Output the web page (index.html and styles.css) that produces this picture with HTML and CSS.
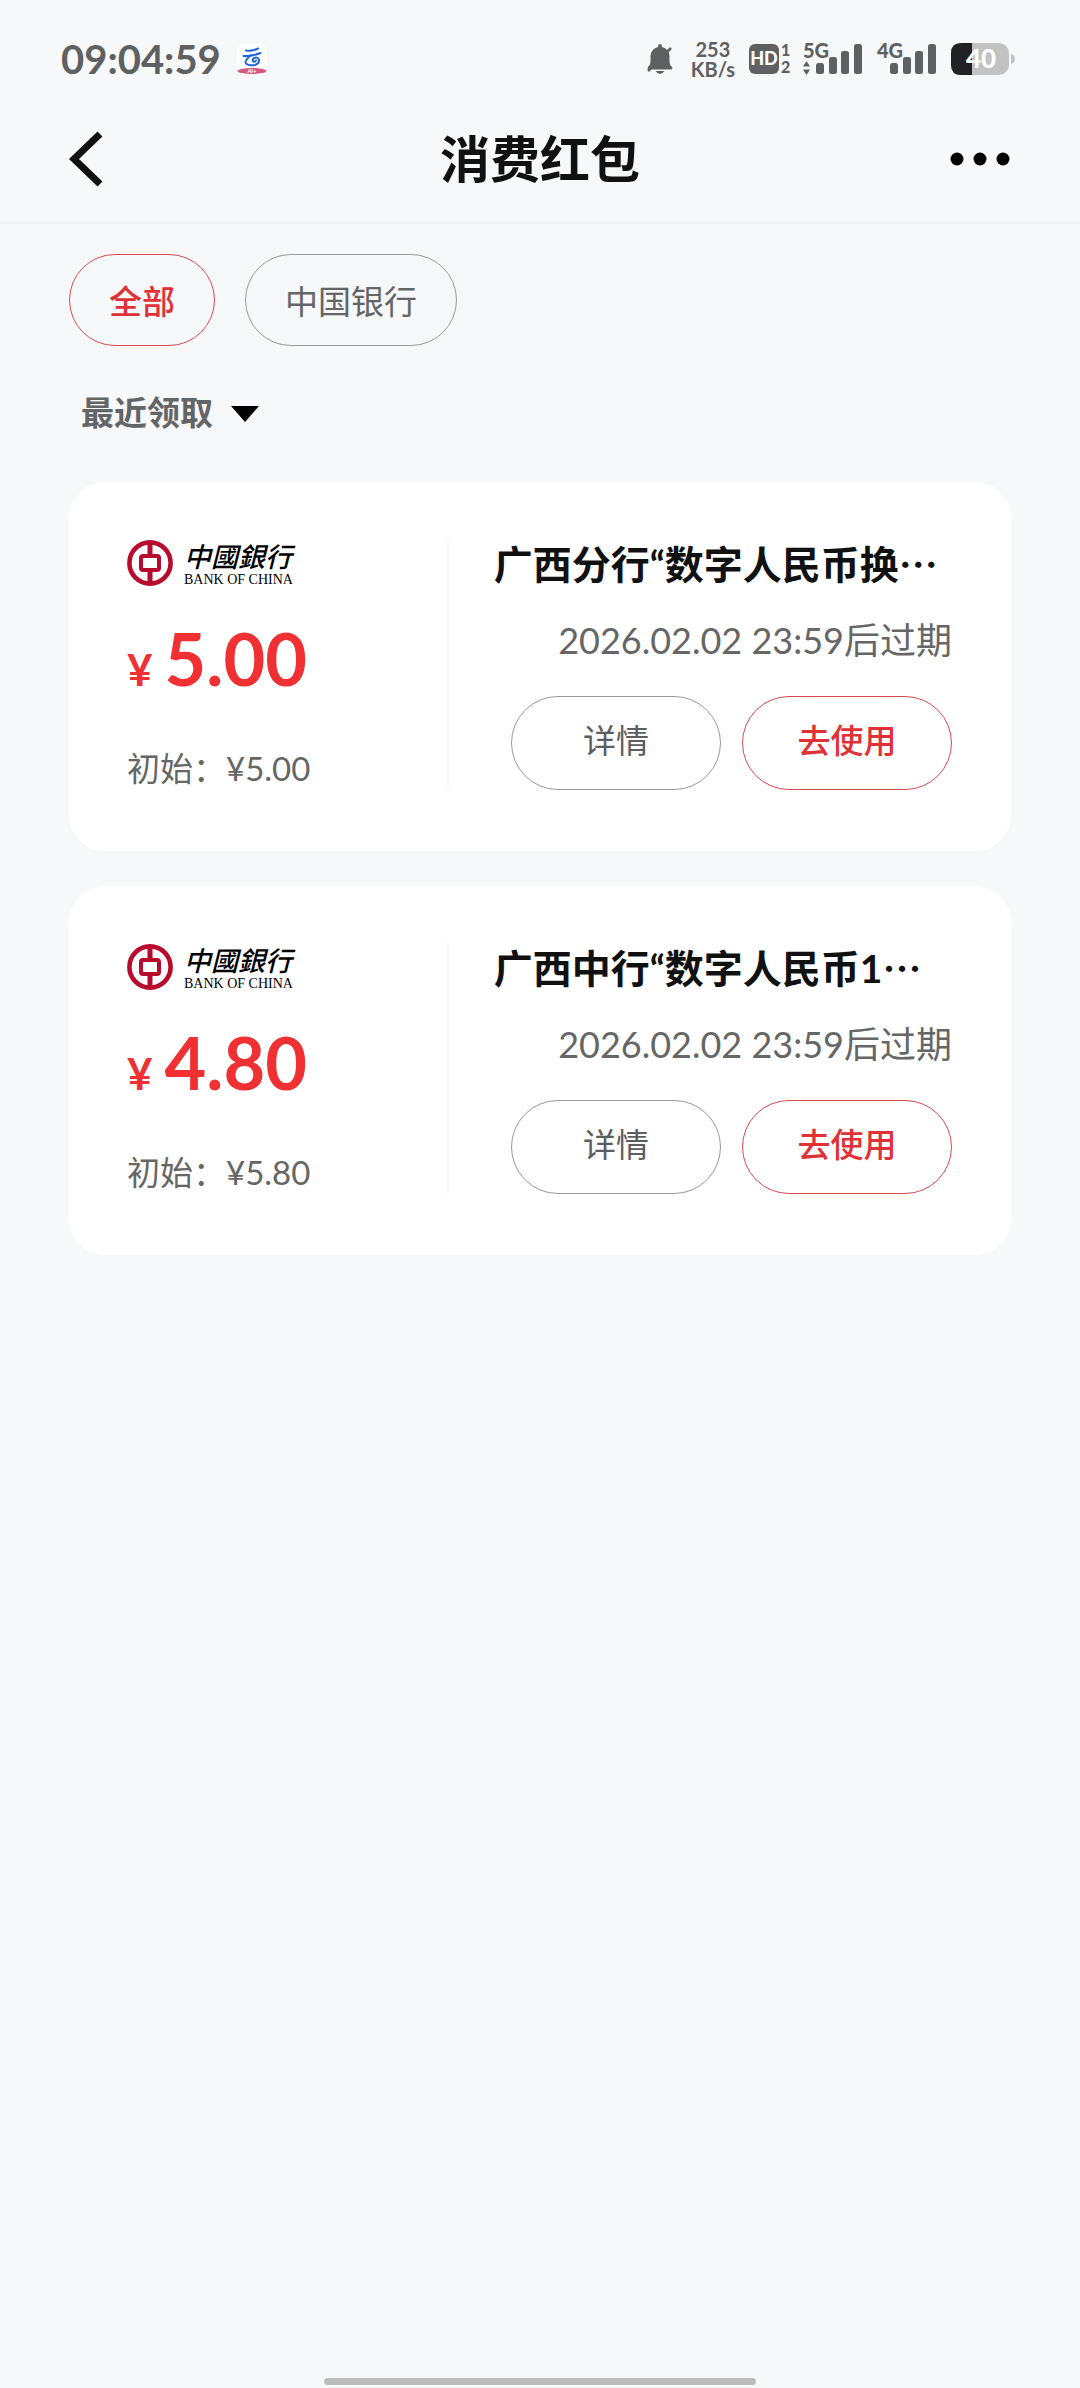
FILE: index.html
```html
<!DOCTYPE html>
<html lang="zh-CN">
<head>
<meta charset="utf-8">
<meta name="viewport" content="width=device-width, initial-scale=1">
<title>消费红包</title>
<link rel="stylesheet" href="styles.css">
</head>
<body>
<svg class="defs" aria-hidden="true">
  <symbol id="boc" viewBox="0 0 46 46">
    <circle cx="23" cy="23" r="20.6" fill="none" stroke="#b80a2c" stroke-width="4.6"/>
    <rect x="14" y="16" width="18" height="14" rx="2" fill="none" stroke="#b80a2c" stroke-width="4"/>
    <path d="M23 2v13M23 31v13" stroke="#b80a2c" stroke-width="5"/>
  </symbol>
  <symbol id="bars" viewBox="0 0 46 30">
    <rect x="0" y="19" width="8" height="11" rx="2.5"/>
    <rect x="13" y="13" width="8" height="17" rx="2.5"/>
    <rect x="25" y="7" width="8" height="23" rx="2.5"/>
    <rect x="38" y="0" width="8" height="30" rx="2.5"/>
  </symbol>
</svg>
<div class="screen">
  <div class="status">
    <div class="status-left">
      <span class="clock">09:04:59</span>
      <svg class="app-icon" width="30" height="30" viewBox="0 0 30 30" aria-hidden="true">
        <rect width="30" height="30" rx="5" fill="#fff"/>
        <path d="M9 6.500q6 1 12-2M6.500 12q8 .5 17-3" fill="none" stroke="#1f66d6" stroke-width="2" stroke-linecap="round"/>
        <path d="M14 11q-7 6-5 8.500t9 1.500q5-2 4-5.500-1.500-3-5-1.500-2.500 2-.5 3.500 2 .5 2.500-1" fill="none" stroke="#1f66d6" stroke-width="2" stroke-linecap="round"/>
        <ellipse cx="15" cy="27" rx="14.500" ry="3" fill="#d4577f"/>
        <text x="15" y="29" class="app-tag" text-anchor="middle">AI+</text>
      </svg>
    </div>
    <div class="status-right">
      <svg class="bell" width="26" height="30" viewBox="0 0 26 30" aria-hidden="true">
        <path d="M13 0q2 0 2 3 7 2 7.500 9v6q0 3 2.500 5 1 2-1 2.500H2Q0 25 1 23q2.500-2 2.500-5v-6Q4 5 11 3q0-3 2-3zM8.500 27h9q-2 3-4.500 3t-4.500-3z"/>
        <path d="M1 27L5 23M20 8L24 4" stroke="currentColor" stroke-width="2.500"/>
      </svg>
      <div class="speed"><span>253</span><span>KB/s</span></div>
      <svg class="hd" width="43" height="32" viewBox="0 0 43 32" aria-hidden="true">
        <rect y="1" width="30" height="30" rx="6"/>
        <text x="15" y="22" class="hd-text" text-anchor="middle">HD</text>
        <text x="32" y="13" class="sim-text">1</text>
        <text x="32" y="30" class="sim-text">2</text>
      </svg>
      <svg class="signal" width="60" height="32" viewBox="0 0 60 32" aria-hidden="true">
        <text x="0" y="15" class="net-text">5G</text>
        <path d="M0 23.500h7L3.500 18zM0 26.500h7L3.500 32z"/>
        <use href="#bars" x="13" y="1" width="46" height="30"/>
      </svg>
      <svg class="signal" width="60" height="32" viewBox="0 0 60 32" aria-hidden="true">
        <text x="0" y="15" class="net-text">4G</text>
        <use href="#bars" x="13" y="1" width="46" height="30"/>
      </svg>
      <svg class="battery" width="64" height="32" viewBox="0 0 64 32" aria-hidden="true">
        <rect width="58" height="32" rx="10" fill="#c2c2c2"/>
        <path d="M21 0H10Q0 0 0 10v12q0 10 10 10h11z" fill="#222"/>
        <path d="M60 11q4 1 4 5t-4 5z" fill="#c2c2c2"/>
        <text x="30" y="25" class="battery-text" text-anchor="middle">40</text>
      </svg>
    </div>
  </div>

  <header class="header">
    <button class="icon-button" type="button" aria-label="返回">
      <svg width="34" height="56" viewBox="0 0 34 56" aria-hidden="true"><path d="M30 3L4 28l26 25" fill="none" stroke="#111" stroke-width="7"/></svg>
    </button>
    <h1 class="title">消费红包</h1>
    <button class="icon-button more" type="button" aria-label="更多">
      <svg width="60" height="14" viewBox="0 0 60 14" aria-hidden="true"><circle cx="7" cy="7" r="6.500"/><circle cx="30" cy="7" r="6.500"/><circle cx="53" cy="7" r="6.500"/></svg>
    </button>
  </header>

  <main class="content">
    <div class="filters">
      <button class="pill pill-active" type="button">全部</button>
      <button class="pill" type="button">中国银行</button>
    </div>
    <label class="sort">
      <select class="sort-select" aria-label="排序"><option>最近领取</option></select>
      <svg class="sort-arrow" width="28" height="16" viewBox="0 0 28 16" aria-hidden="true"><path d="M0 0h28L14 16z"/></svg>
    </label>

    <div class="cards">
      <article class="card">
        <div class="amounts">
          <div class="logo">
            <svg width="46" height="46" aria-hidden="true"><use href="#boc"/></svg>
            <div class="logo-name"><span class="logo-cn">中國銀行</span><span class="logo-en">BANK OF CHINA</span></div>
          </div>
          <p class="price"><span class="yen">¥</span><span>5.00</span></p>
          <p class="initial">初始：¥5.00</p>
        </div>
        <div class="details">
          <h2 class="name">广西分行“数字人民币换<span class="dots">…</span></h2>
          <p class="expiry">2026.02.02 23:59后过期</p>
          <div class="actions">
            <button class="action" type="button">详情</button>
            <button class="action action-main" type="button">去使用</button>
          </div>
        </div>
      </article>
      <article class="card">
        <div class="amounts">
          <div class="logo">
            <svg width="46" height="46" aria-hidden="true"><use href="#boc"/></svg>
            <div class="logo-name"><span class="logo-cn">中國銀行</span><span class="logo-en">BANK OF CHINA</span></div>
          </div>
          <p class="price"><span class="yen">¥</span><span>4.80</span></p>
          <p class="initial">初始：¥5.80</p>
        </div>
        <div class="details">
          <h2 class="name">广西中行“数字人民币1<span class="dots">…</span></h2>
          <p class="expiry">2026.02.02 23:59后过期</p>
          <div class="actions">
            <button class="action" type="button">详情</button>
            <button class="action action-main" type="button">去使用</button>
          </div>
        </div>
      </article>
    </div>
  </main>
  <div class="home-bar"></div>
</div>
</body>
</html>
```
FILE: styles.css
```css
* {
  box-sizing: border-box;
}

body {
  margin: 0;
  background: #f6f8fa;
  color: #111;
  font-family: Lato, "Noto Sans CJK SC", sans-serif;
}

h1, h2, p {
  margin: 0;
}

button, select {
  margin: 0;
  padding: 0;
  border: 0;
  background: none;
  color: inherit;
  font: inherit;
}

svg {
  display: block;
  flex: none;
  overflow: visible;
}

.defs {
  position: absolute;
  width: 0;
  height: 0;
}

.screen {
  display: flex;
  flex-direction: column;
  min-height: 100vh;
}

/* Status bar */
.status {
  display: flex;
  justify-content: space-between;
  align-items: center;
  height: 96px;
  padding: 22px 65px 0 61px;
  color: #5f6062;
  fill: currentColor;
}

.status-left, .status-right {
  display: flex;
  align-items: center;
}

.status-left {
  gap: 16px;
}

.clock {
  font-size: 40px;
  font-weight: 700;
  line-height: 48px;
}

.app-tag {
  fill: #fff;
  font-size: 6px;
  font-weight: 900;
  font-style: italic;
}

.speed {
  display: flex;
  flex-direction: column;
  align-items: center;
  margin: 0 14px 0 18px;
  font-size: 20px;
  font-weight: 700;
  line-height: 20px;
}

.hd {
  margin-right: 11px;
}

.hd-text {
  fill: #fff;
  font-size: 18px;
  font-weight: 900;
}

.sim-text {
  font-size: 16px;
  font-weight: 900;
}

.net-text {
  font-size: 20px;
  font-weight: 900;
}

.signal {
  margin-right: 14px;
}

.battery-text {
  fill: #fff;
  font-size: 26px;
  font-weight: 900;
}

/* Header */
.header {
  display: flex;
  justify-content: space-between;
  align-items: center;
  height: 128px;
  padding: 0 70px;
  border-bottom: 2px solid #f0f1f3;
}

.icon-button {
  display: flex;
  align-items: center;
  width: 64px;
  height: 64px;
}

.more {
  justify-content: flex-end;
}

.title {
  font-size: 50px;
  font-weight: 700;
  line-height: 72px;
}

/* Filters */
.content {
  flex: 1;
  padding: 30px 69px;
}

.filters {
  display: flex;
  gap: 30px;
}

.pill {
  height: 92px;
  padding: 0 39px;
  border: 1px solid #98999b;
  border-radius: 46px;
  color: #646567;
  font-size: 33px;
}

.pill-active {
  border-color: #d84a50;
  color: #e03236;
  font-weight: 500;
}

.sort {
  display: inline-flex;
  align-items: center;
  gap: 18px;
  height: 52px;
  margin: 40px 0 44px 12px;
  vertical-align: top;
}

.sort-select {
  appearance: none;
  color: #646567;
  font-size: 33px;
  font-weight: 700;
  line-height: 52px;
}

.sort-arrow {
  margin-top: 4px;
}

/* Red packet cards */
.cards {
  display: flex;
  flex-direction: column;
  gap: 35px;
}

.card {
  display: flex;
  padding: 56px 59px 61px 58px;
  border-radius: 36px;
  background: #fff;
}

.amounts {
  flex: 0 0 39%;
  padding-top: 2px;
  border-right: 2px solid #f8f8f9;
}

.logo {
  display: flex;
  gap: 11px;
  height: 46px;
}

.logo-name {
  display: flex;
  flex-direction: column;
  color: #000;
}

.logo-cn {
  font-family: "Noto Sans CJK TC", sans-serif;
  font-size: 27px;
  font-style: italic;
  font-weight: 500;
  line-height: 32px;
}

.logo-en {
  font-family: "Liberation Serif", serif;
  font-size: 14px;
  line-height: 16px;
}

.price {
  display: flex;
  align-items: baseline;
  gap: 12px;
  margin-top: 30px;
  color: #f03033;
  font-size: 72px;
  font-weight: 700;
  line-height: 84px;
}

.yen {
  font-size: 44px;
  line-height: 52px;
}

.initial {
  margin-top: 48px;
  color: #666;
  font-size: 33px;
  line-height: 40px;
}

.details {
  flex: 1;
  min-width: 0;
  padding-left: 45px;
}

.name {
  font-size: 39px;
  font-weight: 700;
  line-height: 52px;
  white-space: nowrap;
}

.dots {
  font-family: "Noto Sans CJK SC", sans-serif;
  line-height: 1;
}

.expiry {
  margin-top: 28px;
  color: #666;
  font-size: 36px;
  line-height: 44px;
  text-align: right;
}

.actions {
  display: flex;
  justify-content: flex-end;
  gap: 21px;
  margin-top: 34px;
}

.action {
  width: 210px;
  height: 94px;
  padding-bottom: 8px;
  border: 1px solid #98999b;
  border-radius: 47px;
  color: #5c5d5f;
  font-size: 33px;
}

.action-main {
  border-color: #d84a50;
  color: #e03236;
  font-weight: 500;
}

.home-bar {
  width: 40%;
  height: 7px;
  margin: 0 auto 3px;
  border-radius: 4px;
  background: #bcbcbc;
}
```
